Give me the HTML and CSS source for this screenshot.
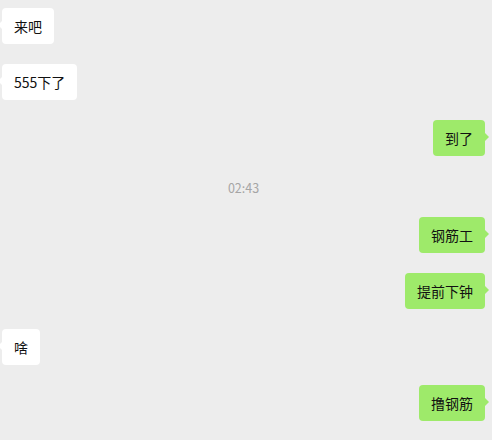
FILE: index.html
```html
<!DOCTYPE html>
<html lang="zh">
<head>
    <meta charset="UTF-8">
    <meta name="viewport" content="width=device-width, initial-scale=1.0">
    <title>Chat</title>
    <link rel="stylesheet" href="styles.css">
</head>
<body>
    <div class="chat">
        <div class="msg left"><div class="bubble">来吧</div></div>
        <div class="msg left"><div class="bubble">555下了</div></div>
        <div class="msg right"><div class="bubble">到了</div></div>
        <div class="time">02:43</div>
        <div class="msg right"><div class="bubble">钢筋工</div></div>
        <div class="msg right"><div class="bubble">提前下钟</div></div>
        <div class="msg left"><div class="bubble">啥</div></div>
        <div class="msg right"><div class="bubble">撸钢筋</div></div>
    </div>
</body>
</html>
```
FILE: styles.css
```css
*{
    margin: 0;
    padding: 0;
    box-sizing: border-box;
}
body{
    background: #ededed;
    font-family: "Noto Sans CJK SC", "Liberation Sans", sans-serif;
    width: 492px;
    height: 440px;
    overflow: hidden;
}
.chat{
    display: flex;
    flex-direction: column;
    padding: 8px 7px 0 2px;
}
.msg{
    display: flex;
    margin-bottom: 20px;
}
.msg.right{
    justify-content: flex-end;
}
.bubble{
    position: relative;
    height: 36px;
    line-height: 36px;
    padding: 0 12px;
    font-size: 14px;
    color: #111;
    border-radius: 4px;
    background: #fff;
}
.right .bubble{
    background: #9eea6a;
}
.bubble::after{
    content: "";
    position: absolute;
    top: 12px;
    border: 5px solid transparent;
}
.left .bubble::after{
    left: -9px;
    border-right-color: #fff;
}
.right .bubble::after{
    right: -9px;
    border-left-color: #9eea6a;
}
.time{
    text-align: center;
    font-size: 12.5px;
    color: #a5a5a5;
    height: 24px;
    line-height: 24px;
    margin-bottom: 17px;
}
```
